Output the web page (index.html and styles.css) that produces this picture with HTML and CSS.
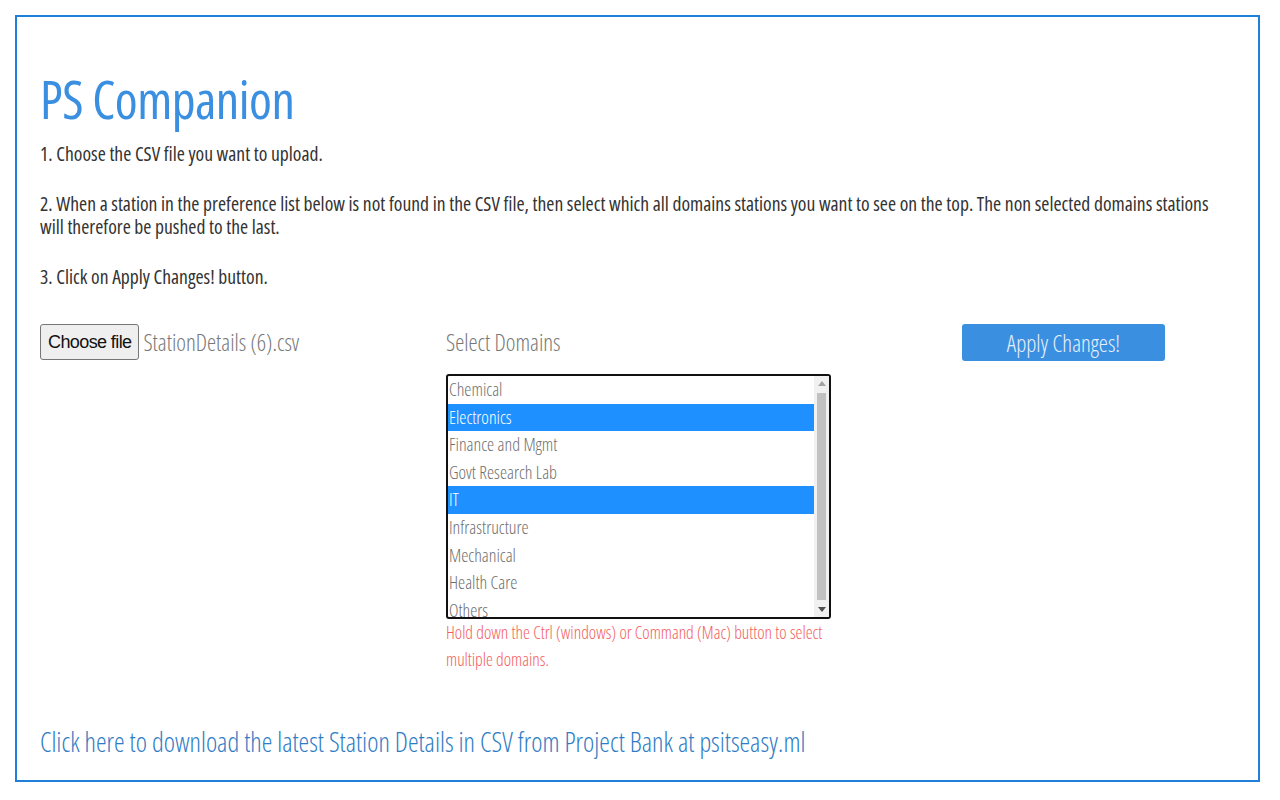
FILE: index.html
```html
<!DOCTYPE html>
<html>
<head>
<meta charset="utf-8">
<link rel="stylesheet" href="styles.css">
</head>
<body>
<div class="frame">
  <h1 class="title">PS Companion</h1>
  <p class="step">1. Choose the CSV file you want to upload.</p>
  <p class="step">2. When a station in the preference list below is not found in the CSV file, then select which all domains stations you want to see on the top. The non selected domains stations will therefore be pushed to the last.</p>
  <p class="step">3. Click on Apply Changes! button.</p>
  <div class="controls">
    <div class="col-file">
      <span class="file-btn">Choose file</span><span class="file-name">StationDetails (6).csv</span>
    </div>
    <div class="col-domains">
      <div class="domains-label">Select Domains</div>
      <div class="listbox">
        <div class="options">
          <div class="opt">Chemical</div>
          <div class="opt sel">Electronics</div>
          <div class="opt">Finance and Mgmt</div>
          <div class="opt">Govt Research Lab</div>
          <div class="opt sel">IT</div>
          <div class="opt">Infrastructure</div>
          <div class="opt">Mechanical</div>
          <div class="opt">Health Care</div>
          <div class="opt">Others</div>
        </div>
        <div class="scrollbar">
          <span class="arrow up"></span>
          <span class="thumb"></span>
          <span class="arrow down"></span>
        </div>
      </div>
      <p class="hint">Hold down the Ctrl (windows) or Command (Mac) button to select multiple domains.</p>
    </div>
    <div class="col-apply">
      <span class="apply-btn">Apply Changes!</span>
    </div>
  </div>
  <a class="download" href="#">Click here to download the latest Station Details in CSV from Project Bank at psitseasy.ml</a>
</div>
</body>
</html>
```
FILE: styles.css
```css
html, body { margin: 0; padding: 0; background: #fff; }
body {
  padding: 15px 20px 0 15px;
  font-family: "Open Sans", "Liberation Sans", sans-serif;
  font-stretch: condensed;
  font-weight: 300;
  color: #333;
}
.frame {
  border: 2px solid #1f7fd9;
  height: 767px;
  box-sizing: border-box;
  padding: 52px 23px 0 23px;
  display: flex;
  flex-direction: column;
}
.title {
  margin: 0 0 13px 0;
  font-weight: 400;
  font-size: 52px;
  line-height: 60px;
  color: #3b8fe0;
  letter-spacing: -0.5px;
}
.step {
  margin: 0 0 27px 0;
  font-size: 19.6px;
  font-weight: 400;
  line-height: 23px;
  color: #333;
}
.controls {
  display: grid;
  grid-template-columns: 406px 516px 220px;
  margin-top: 9px;
}
.col-file { display: flex; align-items: center; height: 36px; align-self: start; }
.file-btn {
  font-family: "Liberation Sans", Arial, sans-serif;
  font-stretch: normal;
  font-weight: 400;
  font-size: 18px;
  color: #111;
  background: #efefef;
  border: 1px solid #767676;
  border-radius: 3px;
  padding: 0 7px;
  height: 36px;
  box-sizing: border-box;
  display: flex;
  align-items: center;
  letter-spacing: -0.6px;
}
.file-name { font-size: 23px; color: #777; margin-left: 4px; }
.domains-label { font-size: 23px; color: #777; height: 36px; line-height: 36px; margin-bottom: 14px; }
.listbox {
  width: 385px;
  height: 245px;
  box-sizing: border-box;
  border: 2px solid #111;
  border-radius: 3px;
  display: flex;
  overflow: hidden;
}
.options { flex: 1; overflow: hidden; }
.opt {
  height: 27.6px;
  line-height: 27.6px;
  font-size: 18px;
  color: #6f6f6f;
  padding-left: 1px;
}
.opt.sel { background: #1e90ff; color: #fff; }
.scrollbar {
  width: 15px;
  background: #f1f1f1;
  display: flex;
  flex-direction: column;
  align-items: center;
}
.arrow { width: 0; height: 0; border-left: 4px solid transparent; border-right: 4px solid transparent; margin: 5px 0; }
.arrow.up { border-bottom: 5px solid #a3a3a3; }
.arrow.down { border-top: 5px solid #505050; }
.thumb { flex: 1; width: 9px; background: #c1c1c1; margin: 2px 0; }
.hint {
  margin: 0;
  font-size: 17.5px;
  line-height: 27px;
  color: #f25e5e;
  width: 390px;
}
.apply-btn {
  display: flex;
  align-items: center;
  justify-content: center;
  width: 203px;
  height: 37px;
  background: #3a8fe0;
  color: #e6f0fb;
  font-size: 23px;
  border-radius: 3px;
}
.download {
  margin-top: auto;
  margin-bottom: 20px;
  font-size: 26.8px;
  font-weight: 300;
  color: #2f7cc4;
  text-decoration: none;
}
```
